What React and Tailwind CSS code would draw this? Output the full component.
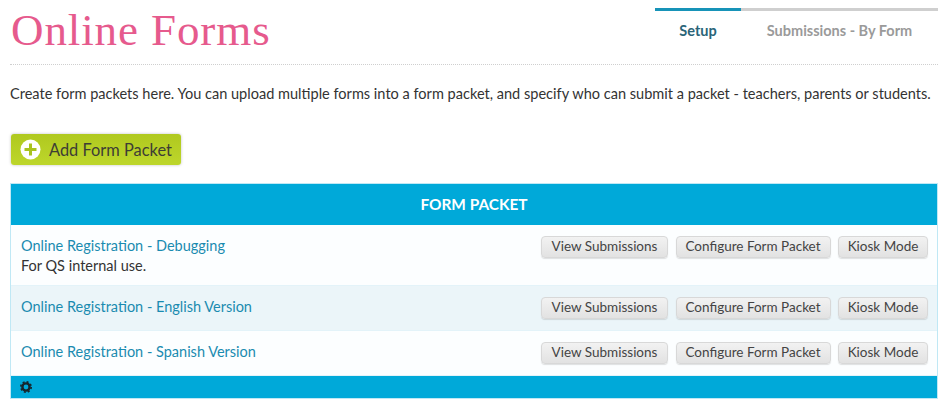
import React from "react";

const rows = [
  { name: "Online Registration - Debugging", note: "For QS internal use.", height: "h-[61px]", bg: "bg-[#fcfeff]" },
  { name: "Online Registration - English Version", height: "h-[45px]", bg: "bg-[#ebf5f9]" },
  { name: "Online Registration - Spanish Version", height: "h-[45px]", bg: "bg-[#fcfeff]" },
];

function RowButton({ width, children }) {
  return (
    <button className={`${width} h-[22px] rounded-[4px] border border-[#d8d8d8] bg-gradient-to-b from-[#f2f2f2] to-[#e2e2e2] text-[13.5px] leading-none text-[#444] shadow-[0_1px_1px_rgba(0,0,0,0.12)]`}>
      {children}
    </button>
  );
}

export default function App() {
  return (
    <div className="w-[951px] h-[407px] overflow-hidden bg-white font-['Lato','Liberation_Sans',sans-serif] text-[#333]">
      <header className="ml-[10px] mr-[13px] h-[65px] flex justify-between border-b border-dotted border-[#cfcfcf]">
        <h1 className="pl-px pt-[7px] font-['Liberation_Serif',serif] text-[45px] leading-[46px] tracking-[0.9px] text-[#e65a8d]">Online Forms</h1>
        <nav className="flex pt-[8px] text-[14.5px] font-bold">
          <div className="w-[86px] h-[3px] border-t-[3px] border-[#1793b8] pt-[9px] text-center text-[#2a6478]">Setup</div>
          <div className="w-[197px] h-[3px] border-t-[3px] border-[#cfcfcf] pt-[9px] text-center text-[#9a9a9a]">Submissions - By Form</div>
        </nav>
      </header>

      <p className="ml-[10px] mt-[20px] text-[14.55px] leading-[18px] whitespace-nowrap">
        Create form packets here. You can upload multiple forms into a form packet, and specify who can submit a packet - teachers, parents or students.
      </p>

      <button className="ml-[11px] mt-[31px] w-[170px] h-[31px] flex items-center gap-[8px] pl-[9px] rounded-[3px] bg-gradient-to-b from-[#b0c91f] to-[#bdd62b] text-[16.4px] text-[#3d3d35] shadow-[0_0_3px_rgba(0,0,0,0.25)]">
        <svg width="21" height="21" viewBox="0 0 21 21">
          <circle cx="10.5" cy="10.5" r="10" fill="#fff" />
          <path d="M10.5 4.5v12M4.5 10.5h12" stroke="#a9c31f" strokeWidth="3" />
        </svg>
        <span className="pt-[2px]">Add Form Packet</span>
      </button>

      <div className="ml-[10px] mr-[13px] mt-[18px] border border-[#bfe8f5]">
        <div className="h-[41px] flex items-center justify-center bg-[#00a9d9] text-[15.4px] font-bold text-white">FORM PACKET</div>
        {rows.map((row) => (
          <div key={row.name} className={`${row.height} ${row.bg} flex justify-between border-b border-[#e3f3f9] pl-[10px] pr-[9px] pt-[11px]`}>
            <div className="text-[14.5px] leading-[20px]">
              <a className="text-[#1a8bb0]">{row.name}</a>
              {row.note && <div>{row.note}</div>}
            </div>
            <div className="flex gap-[7.5px]">
              <RowButton width="w-[127px]">View Submissions</RowButton>
              <RowButton width="w-[155px]">Configure Form Packet</RowButton>
              <RowButton width="w-[90px]">Kiosk Mode</RowButton>
            </div>
          </div>
        ))}
        <div className="h-[22px] flex items-center pl-[8px] bg-[#00a9d9]">
          <svg width="14" height="14" viewBox="0 0 14 14" fill="none" stroke="#16262c">
            <circle cx="7" cy="7" r="3.6" strokeWidth="2.4" />
            <circle cx="7" cy="7" r="5.2" strokeWidth="1.6" strokeDasharray="2 2.08" />
          </svg>
        </div>
      </div>
    </div>
  );
}
